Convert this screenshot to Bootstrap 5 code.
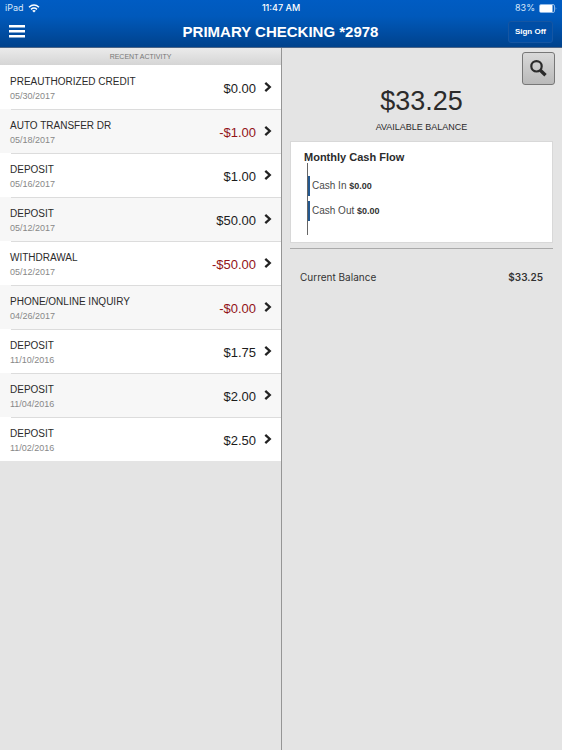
<!DOCTYPE html>
<html lang="en">
<head>
<meta charset="utf-8">
<meta name="viewport" content="width=device-width, initial-scale=1">
<title>Primary Checking</title>
<link href="https://cdn.jsdelivr.net/npm/bootstrap@5.3.0/dist/css/bootstrap.min.css" rel="stylesheet">
<style>
body { font-family: "Liberation Sans", Arial, sans-serif; background: #e4e4e4; color: #2b2b2b; }
.top-area { background: linear-gradient(#005cc3, #0059bb 35%, #00428c); border-bottom: 1px solid #4c6587; color: #fff; }
.status-line { font: 9px/16px Inter, sans-serif; padding: 0 5px; color: #d8e8fb; }
.status-line .clock { color: #fff; font-weight: 500; }
.title-line { height: 31px; padding: 0 9px 0 8px; }
.title-line h1 { font-size: 15px; line-height: 20px; font-weight: 700; }
.menu-btn { line-height: 0; }
.sign-btn { font-size: 8px; line-height: 12px; font-weight: 700; color: #fff; border: 1px solid #1556a3; border-radius: 3px; padding: 4px 6px; background: #004ea6; }
.activity-head { font-size: 7px; line-height: 17px; font-weight: 400; color: #777; background: linear-gradient(#ebebeb, #d5d5d5); }
.activity-item { height: 44px; padding: 0 9px 0 10px; color: #2b2b2b; background: #fff; position: relative; }
.activity-item:nth-child(even) { background: #f7f7f7; }
.activity-item + .activity-item::before { content: ""; position: absolute; top: 0; left: 11px; right: 0; border-top: 1px solid #dcdcdc; }
.item-text { padding-top: 3px; }
.item-name { font-size: 10px; line-height: 14px; }
.item-date { font-size: 9px; line-height: 14px; color: #888; }
.item-sum { font-size: 13px; line-height: 16px; color: #1c1c1c; padding-top: 4px; }
.item-sum.minus { color: #921318; }
.detail-pane { border-left: 1px solid #959595; padding: 4px 9px 0 8px; }
.find-btn { width: 33px; height: 33px; border: 1px solid #777; border-radius: 3px; background: linear-gradient(#d9d9d9, #b9b9b9); position: absolute; top: 4px; right: 7px; }
.balance-sum { font-size: 27px; line-height: 32px; padding-top: 33px; }
.balance-label { font-size: 9px; line-height: 12px; margin-top: 4px; }
.flow-card { border: 1px solid #d8d8d8; background: #fff; margin-top: 8px; padding: 9px 13px 7px; }
.flow-card h2 { font-size: 11px; line-height: 12px; font-weight: 700; }
.flow-plot { margin-left: 3px; height: 72px; border-left: 1px solid #666; padding-top: 13px; gap: 5px; }
.flow-row { font-size: 10px; line-height: 20px; border-left: 2px solid #24588f; padding-left: 2px; color: #4a4a4a; }
.flow-row strong { font-size: 9px; color: #333; }
.pane-rule { border-top: 1px solid #aaa; margin-top: 5px; }
.current-line { font: 10px/14px Inter, sans-serif; padding: 21px 10px 0; color: #333; }
.current-line strong { font-weight: 600; }
</style>
<script src="https://cdn.jsdelivr.net/npm/bootstrap@5.3.0/dist/js/bootstrap.bundle.min.js"></script>
</head>
<body class="min-vh-100 d-flex flex-column">
<svg class="d-none" aria-hidden="true"><symbol id="chev" viewBox="0 0 8 12"><path d="M1.3 1.8 5.8 6 1.3 10.2" fill="none" stroke="#222" stroke-width="2.3"/></symbol></svg>
<header class="top-area">
  <div class="status-line row g-0 align-items-center">
    <div class="col d-flex align-items-center gap-1"><span>iPad</span>
      <svg width="12" height="9" viewBox="0 0 12 9" fill="none" stroke="#fff" stroke-width="1.5" aria-hidden="true"><path d="M1 3.2Q6-1.2 11 3.2M3 5.3Q6 2.9 9 5.3"/><path d="M4.2 6.7Q6 5.4 7.8 6.7L6 8.6Z" fill="#fff" stroke="none"/></svg>
    </div>
    <div class="col-auto clock">11:47 AM</div>
    <div class="col d-flex align-items-center justify-content-end gap-1"><span>83%</span>
      <svg width="18" height="9" viewBox="0 0 18 9" aria-hidden="true"><rect x=".5" y=".5" width="15" height="8" rx="1.5" fill="none" stroke="#8db8e8"/><rect x="1" y="1" width="12.5" height="7" rx=".5" fill="#fff"/><path d="M16.7 3v3q1.3-1.5 0-3" fill="#8db8e8"/></svg>
    </div>
  </div>
  <div class="title-line row g-0 align-items-center">
    <div class="col"><button type="button" class="btn p-0 border-0 menu-btn" aria-label="Menu"><svg width="18" height="14" viewBox="0 0 18 14" fill="#fff" aria-hidden="true"><path d="M1 0h16v2.5H1zM1 5h16v2.5H1zM1 10h16v2.5H1z"/></svg></button></div>
    <h1 class="col-auto m-0">PRIMARY CHECKING *2978</h1>
    <div class="col text-end d-flex justify-content-end"><button type="button" class="btn sign-btn">Sign Off</button></div>
  </div>
</header>
<main class="row g-0 flex-grow-1">
  <section class="col-6">
    <h2 class="activity-head text-center m-0">RECENT ACTIVITY</h2>
    <div>
      <a href="#" class="activity-item d-flex align-items-center justify-content-between text-decoration-none"><span class="item-text d-flex flex-column"><span class="item-name">PREAUTHORIZED CREDIT</span><span class="item-date">05/30/2017</span></span><span class="d-flex align-items-center gap-2"><span class="item-sum">$0.00</span><svg width="8" height="12" aria-hidden="true"><use href="#chev"/></svg></span></a>
      <a href="#" class="activity-item d-flex align-items-center justify-content-between text-decoration-none"><span class="item-text d-flex flex-column"><span class="item-name">AUTO TRANSFER DR</span><span class="item-date">05/18/2017</span></span><span class="d-flex align-items-center gap-2"><span class="item-sum minus">-$1.00</span><svg width="8" height="12" aria-hidden="true"><use href="#chev"/></svg></span></a>
      <a href="#" class="activity-item d-flex align-items-center justify-content-between text-decoration-none"><span class="item-text d-flex flex-column"><span class="item-name">DEPOSIT</span><span class="item-date">05/16/2017</span></span><span class="d-flex align-items-center gap-2"><span class="item-sum">$1.00</span><svg width="8" height="12" aria-hidden="true"><use href="#chev"/></svg></span></a>
      <a href="#" class="activity-item d-flex align-items-center justify-content-between text-decoration-none"><span class="item-text d-flex flex-column"><span class="item-name">DEPOSIT</span><span class="item-date">05/12/2017</span></span><span class="d-flex align-items-center gap-2"><span class="item-sum">$50.00</span><svg width="8" height="12" aria-hidden="true"><use href="#chev"/></svg></span></a>
      <a href="#" class="activity-item d-flex align-items-center justify-content-between text-decoration-none"><span class="item-text d-flex flex-column"><span class="item-name">WITHDRAWAL</span><span class="item-date">05/12/2017</span></span><span class="d-flex align-items-center gap-2"><span class="item-sum minus">-$50.00</span><svg width="8" height="12" aria-hidden="true"><use href="#chev"/></svg></span></a>
      <a href="#" class="activity-item d-flex align-items-center justify-content-between text-decoration-none"><span class="item-text d-flex flex-column"><span class="item-name">PHONE/ONLINE INQUIRY</span><span class="item-date">04/26/2017</span></span><span class="d-flex align-items-center gap-2"><span class="item-sum minus">-$0.00</span><svg width="8" height="12" aria-hidden="true"><use href="#chev"/></svg></span></a>
      <a href="#" class="activity-item d-flex align-items-center justify-content-between text-decoration-none"><span class="item-text d-flex flex-column"><span class="item-name">DEPOSIT</span><span class="item-date">11/10/2016</span></span><span class="d-flex align-items-center gap-2"><span class="item-sum">$1.75</span><svg width="8" height="12" aria-hidden="true"><use href="#chev"/></svg></span></a>
      <a href="#" class="activity-item d-flex align-items-center justify-content-between text-decoration-none"><span class="item-text d-flex flex-column"><span class="item-name">DEPOSIT</span><span class="item-date">11/04/2016</span></span><span class="d-flex align-items-center gap-2"><span class="item-sum">$2.00</span><svg width="8" height="12" aria-hidden="true"><use href="#chev"/></svg></span></a>
      <a href="#" class="activity-item d-flex align-items-center justify-content-between text-decoration-none"><span class="item-text d-flex flex-column"><span class="item-name">DEPOSIT</span><span class="item-date">11/02/2016</span></span><span class="d-flex align-items-center gap-2"><span class="item-sum">$2.50</span><svg width="8" height="12" aria-hidden="true"><use href="#chev"/></svg></span></a>
    </div>
  </section>
  <section class="col-6 detail-pane position-relative">
    <button type="button" class="btn find-btn p-0 d-flex align-items-center justify-content-center" aria-label="Search"><svg width="17" height="17" viewBox="0 0 17 17" fill="none" stroke="#2b2b2b" aria-hidden="true"><circle cx="6.5" cy="6.3" r="5.2" stroke-width="2.2"/><path d="m10.3 10.2 5.2 5" stroke-width="3.4"/></svg></button>
    <div class="balance-sum text-center">$33.25</div>
    <div class="balance-label text-center">AVAILABLE BALANCE</div>
    <div class="flow-card">
      <h2 class="m-0">Monthly Cash Flow</h2>
      <div class="flow-plot d-flex flex-column">
        <div class="flow-row">Cash In <strong>$0.00</strong></div>
        <div class="flow-row">Cash Out <strong>$0.00</strong></div>
      </div>
    </div>
    <div class="pane-rule"></div>
    <div class="current-line d-flex justify-content-between"><span>Current Balance</span><strong>$33.25</strong></div>
  </section>
</main>
</body>
</html>
